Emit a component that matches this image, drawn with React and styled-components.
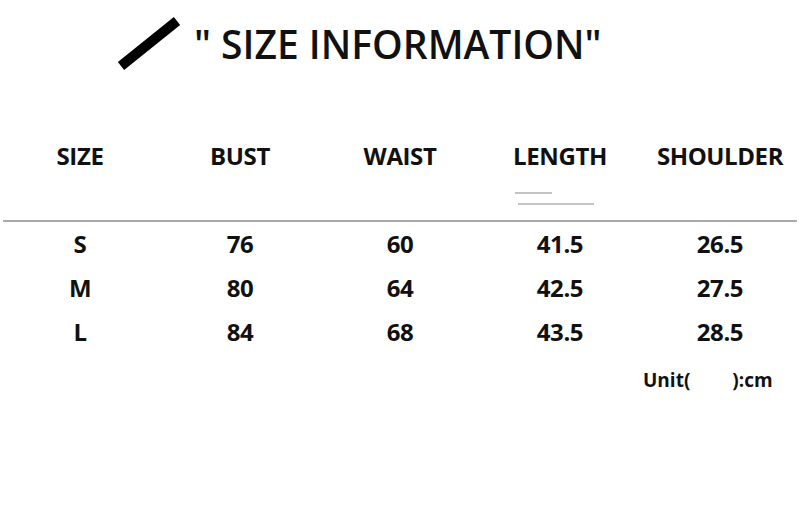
import React from "react";
import styled, { createGlobalStyle } from "styled-components";

const Global = createGlobalStyle`
  html, body { margin: 0; padding: 0; background: #ffffff; }
  body { width: 800px; height: 514px; overflow: hidden; }
`;

const Page = styled.div`
  width: 800px;
  height: 514px;
  background: #fff;
  display: flex;
  flex-direction: column;
  font-family: "Open Sans", "Liberation Sans", sans-serif;
  color: #111;
`;

const TitleRow = styled.div`
  display: flex;
  align-items: center;
  height: 86px;
  padding-left: 116px;
  box-sizing: border-box;
`;

const Slash = styled.svg`
  width: 66px;
  height: 58px;
  flex: none;
  margin-top: 6px;
`;

const Title = styled.h1`
  margin: 0 0 0 12px;
  font-size: 39px;
  font-weight: 600;
  letter-spacing: 0px;
  color: #111;
  line-height: 1;
`;

const HeaderGrid = styled.div`
  display: grid;
  grid-template-columns: repeat(5, 160px);
  margin-top: 53px;
  height: 34px;
  align-items: center;
`;

const HeadCell = styled.div`
  text-align: center;
  font-size: 24px;
  font-weight: 700;
  letter-spacing: -0.4px;
  line-height: 34px;
`;

const Marks = styled.div`
  position: relative;
  height: 47px;
`;

const Mark = styled.div`
  position: absolute;
  height: 2px;
  background: #c4c4c4;
  left: ${(p) => p.$left}px;
  top: ${(p) => p.$top}px;
  width: ${(p) => p.$width}px;
`;

const Divider = styled.div`
  height: 2px;
  margin: 0 3px;
  background: #a9a9a9;
`;

const Body = styled.div`
  display: grid;
  grid-template-columns: repeat(5, 160px);
  grid-auto-rows: 44px;
  margin-top: 0px;
`;

const Cell = styled.div`
  text-align: center;
  font-size: 24px;
  font-weight: 700;
  line-height: 44px;
  letter-spacing: -0.4px;
`;

const UnitRow = styled.div`
  display: flex;
  padding-left: 643px;
  margin-top: 14px;
  font-size: 19px;
  font-weight: 700;
  line-height: 24px;
`;

const Gap = styled.span`
  display: inline-block;
  width: 42px;
`;

const headers = ["SIZE", "BUST", "WAIST", "LENGTH", "SHOULDER"];
const rows = [
  ["S", "76", "60", "41.5", "26.5"],
  ["M", "80", "64", "42.5", "27.5"],
  ["L", "84", "68", "43.5", "28.5"],
];

export default function App() {
  return (
    <>
      <Global />
      <Page>
        <TitleRow>
          <Slash viewBox="0 0 66 58">
            <line x1="5" y1="49" x2="61" y2="4" stroke="#000" strokeWidth="10" />
          </Slash>
          <Title>" SIZE INFORMATION"</Title>
        </TitleRow>
        <HeaderGrid>
          {headers.map((h) => (
            <HeadCell key={h}>{h}</HeadCell>
          ))}
        </HeaderGrid>
        <Marks>
          <Mark $left={515} $top={19} $width={37} />
          <Mark $left={518} $top={30} $width={76} />
        </Marks>
        <Divider />
        <Body>
          {rows.map((r) =>
            r.map((v, i) => <Cell key={r[0] + i}>{v}</Cell>)
          )}
        </Body>
        <UnitRow>
          <span>Unit(</span>
          <Gap />
          <span>):cm</span>
        </UnitRow>
      </Page>
    </>
  );
}
